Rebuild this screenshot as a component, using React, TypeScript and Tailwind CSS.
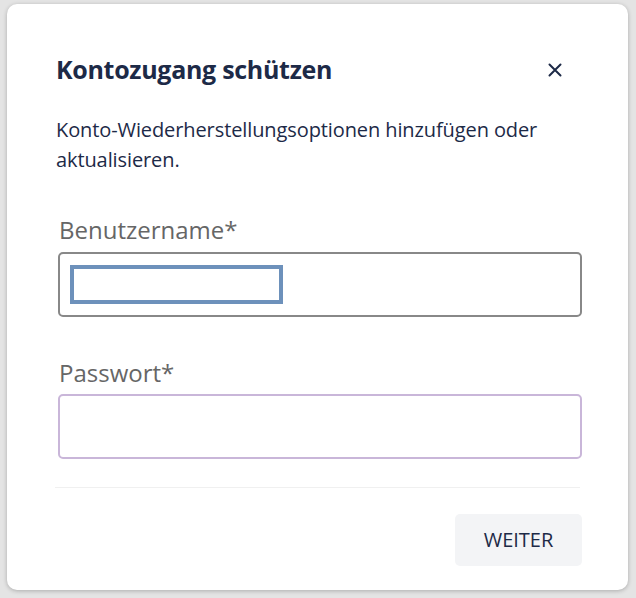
import React from "react";

export default function App() {
  return (
    <div className="w-[636px] h-[598px] bg-[#e4e4e4] pt-[4px] pl-[7px]" style={{ fontFamily: '"Open Sans", sans-serif' }}>
      <div className="w-[621px] h-[586px] bg-white rounded-[10px] shadow-[0_1px_4px_rgba(0,0,0,0.25)] flex flex-col">
        <div className="flex items-center justify-between pl-[49px] pr-[66px] pt-[50px]">
          <h1 className="text-[25px] leading-[30px] font-bold text-[#1d2a47] tracking-[-0.3px]">Kontozugang schützen</h1>
          <svg width="14" height="14" viewBox="0 0 14 14" className="mt-[2px]">
            <path d="M1.5 1.5 L12.5 12.5 M12.5 1.5 L1.5 12.5" stroke="#1d2a47" strokeWidth="2" strokeLinecap="round" />
          </svg>
        </div>
        <p className="pl-[49px] pr-[60px] mt-[31px] text-[20px] leading-[30px] text-[#1d2a47] tracking-[-0.1px]">
          Konto-Wiederherstellungsoptionen hinzufügen oder aktualisieren.
        </p>
        <div className="pl-[51px] pr-[46px] mt-[40px] flex flex-col">
          <label className="pl-[1px] text-[24px] leading-[30px] text-[#666666]">Benutzername*</label>
          <div className="mt-[7px] h-[65px] border-[2px] border-[#888888] rounded-[5px] flex items-center pl-[10px]">
            <div className="w-[213px] h-[39px] border-[4px] border-[#6d91bb]" />
          </div>
          <label className="pl-[1px] mt-[41px] text-[24px] leading-[30px] text-[#666666]">Passwort*</label>
          <div className="mt-[6px] h-[65px] border-[2px] border-[#c9b6d9] rounded-[5px]" />
        </div>
        <div className="mx-[48px] mt-[28px] border-t border-[#f0f0f0]" />
        <div className="flex justify-end pr-[46px] mt-[26px]">
          <button className="w-[127px] h-[52px] bg-[#f3f4f6] rounded-[5px] text-[20px] text-[#1d2a47]">WEITER</button>
        </div>
      </div>
    </div>
  );
}
